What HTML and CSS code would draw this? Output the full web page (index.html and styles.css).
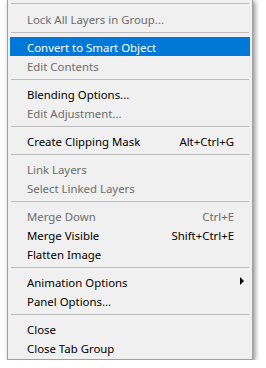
FILE: index.html
```html
<!DOCTYPE html>
<html lang="en">
<head>
    <meta charset="UTF-8">
    <meta name="viewport" content="width=device-width, initial-scale=1.0">
    <title>Layers Panel Menu</title>
    <link rel="stylesheet" href="styles.css">
</head>
<body>

    <div class="menu">
        <div class="sep sep-first"></div>
        <div class="item disabled">Lock All Layers in Group...</div>
        <div class="sep"></div>
        <div class="item active">Convert to Smart Object</div>
        <div class="item disabled">Edit Contents</div>
        <div class="sep"></div>
        <div class="item">Blending Options...</div>
        <div class="item disabled">Edit Adjustment...</div>
        <div class="sep"></div>
        <div class="item">Create Clipping Mask <span class="shortcut">Alt+Ctrl+G</span></div>
        <div class="sep"></div>
        <div class="item disabled">Link Layers</div>
        <div class="item disabled">Select Linked Layers</div>
        <div class="sep"></div>
        <div class="item disabled">Merge Down <span class="shortcut">Ctrl+E</span></div>
        <div class="item">Merge Visible <span class="shortcut">Shift+Ctrl+E</span></div>
        <div class="item">Flatten Image</div>
        <div class="sep"></div>
        <div class="item">Animation Options <span class="arrow"></span></div>
        <div class="item">Panel Options...</div>
        <div class="sep"></div>
        <div class="item">Close</div>
        <div class="item">Close Tab Group</div>
    </div>

</body>
</html>
```

FILE: styles.css
```css
body {
    margin: 0;
    padding: 0;
    background-color: #ffffff;
    font-family: 'Noto Sans', 'Open Sans', sans-serif;
    font-size: 11.4px;
}

.menu {
    width: 244px;
    margin: -1px 0 0 7px;
    padding-bottom: 2px;
    background-color: #f0f0f0;
    border: 1px solid #a0a0a0;
    box-shadow: 2px 2px 5px rgba(0, 0, 0, 0.45);
}

.sep {
    height: 1px;
    margin: 4px 3px 4px 3px;
    background-color: #bcbcbc;
}

.sep-first {
    margin-top: 3px;
    margin-bottom: 5px;
}

.item {
    height: 19px;
    box-sizing: border-box;
    margin: 0 2px;
    padding: 1px 16px 0 17px;
    display: flex;
    align-items: center;
    color: #000000;
    white-space: nowrap;
}

.item.disabled {
    color: #6d6d6d;
}

.item.active {
    background-color: #0078d7;
    color: #ffffff;
}

.shortcut {
    margin-left: auto;
}

.arrow {
    margin-left: auto;
    margin-right: -10px;
    margin-top: -2px;
    width: 0;
    height: 0;
    border-left: 4px solid #000000;
    border-top: 4px solid transparent;
    border-bottom: 4px solid transparent;
}
```
